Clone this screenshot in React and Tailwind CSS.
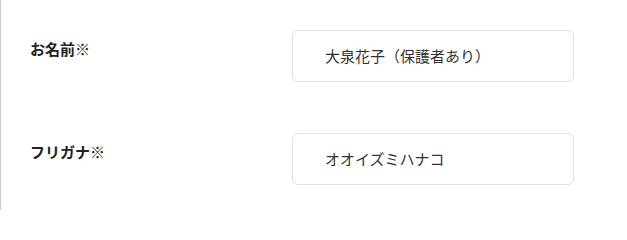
import React from 'react'

const fields = [
    { label: 'お名前※', value: '大泉花子（保護者あり）' },
    { label: 'フリガナ※', value: 'オオイズミハナコ' },
]

const App = () => {
    return (
        <div
            className="w-[627px] h-[210px] bg-white border-l border-[#cccccc] pl-[29px] pt-[30px] flex flex-col gap-[51px]"
            style={{ fontFamily: '"Noto Sans CJK JP", "Noto Sans", sans-serif' }}
        >
            {fields.map((field) => (
                <div key={field.label} className="flex">
                    {/* label */}
                    <div className="w-[262px] pt-[8px] text-[15px] leading-[22px] font-bold text-[#222222]">
                        {field.label}
                    </div>
                    {/* input */}
                    <div className="w-[282px] h-[52px] border border-[#e0e0e0] rounded-[6px] flex items-center pl-[32px] text-[15px] text-[#333333]">
                        {field.value}
                    </div>
                </div>
            ))}
        </div>
    )
}

export default App
